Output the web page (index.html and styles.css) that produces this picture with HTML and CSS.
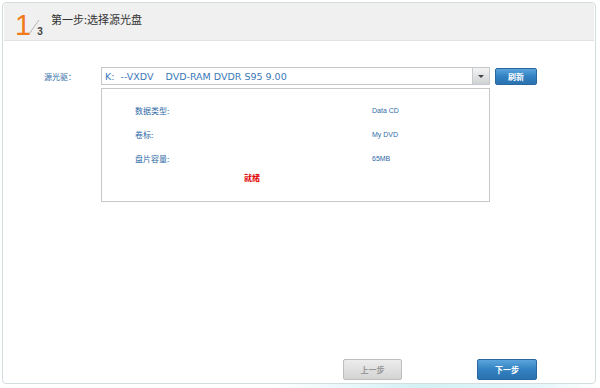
FILE: index.html
```html
<!DOCTYPE html>
<html lang="zh-CN">
<head>
    <meta charset="UTF-8">
    <title>选择源光盘</title>
    <link rel="stylesheet" href="styles.css">
</head>
<body>
    <div class="panel">
        <!-- Cabecera del paso -->
        <div class="header">
            <span class="step">
                <span class="step-num">1</span>
                <svg class="step-slash" width="12" height="16" viewBox="0 0 12 16"><line x1="1" y1="15" x2="11" y2="1" stroke="#b5b5b5" stroke-width="1"/></svg>
                <span class="step-total">3</span>
            </span>
            <span class="title">第一步:选择源光盘</span>
        </div>

        <div class="content">
            <div class="form-row">
                <span class="label">源光驱：</span>
                <div class="select">
                    <span class="select-text">K:  --VXDV    DVD-RAM DVDR S95 9.00</span>
                    <span class="select-arrow"></span>
                </div>
                <button class="btn btn-blue btn-small">刷新</button>
            </div>

            <div class="info">
                <div class="info-row"><span class="info-key">数据类型:</span><span class="info-val">Data CD</span></div>
                <div class="info-row"><span class="info-key">卷标:</span><span class="info-val">My DVD</span></div>
                <div class="info-row"><span class="info-key">盘片容量:</span><span class="info-val">65MB</span></div>
                <div class="status">就绪</div>
            </div>
        </div>

        <div class="footer">
            <button class="btn btn-gray">上一步</button>
            <button class="btn btn-blue">下一步</button>
        </div>
    </div>
</body>
</html>
```

FILE: styles.css
```css
html, body {
    margin: 0;
    height: 388px;
}
body {
    font-family: 'Noto Sans CJK SC', 'Liberation Sans', sans-serif;
    background: #fff linear-gradient(to right, #fff 45%, #d3f0f5 70%, #e6f7fa 90%, #fff) no-repeat left bottom;
    background-size: 100% 5px;
    overflow: hidden;
}
.panel {
    box-sizing: border-box;
    margin: 2px 4px 0 2px;
    height: 382px;
    border: 1px solid #d3dcde;
    border-radius: 4px;
    background: #fff;
    display: flex;
    flex-direction: column;
}
.header {
    height: 37px;
    margin: 0 1px;
    background: #f0f0f0;
    border-bottom: 1px solid #e2e2e2;
    display: flex;
    align-items: center;
    padding-left: 11px;
}
.step {
    display: inline-flex;
    align-items: flex-end;
    width: 36px;
    height: 30px;
    margin-top: 2px;
}
.step-num {
    font-family: 'Liberation Sans', sans-serif;
    font-size: 29px;
    line-height: 26px;
    color: #f27a1a;
}
.step-slash {
    margin-left: -3px;
    margin-bottom: 3px;
}
.step-total {
    font-family: 'Liberation Sans', sans-serif;
    font-size: 10px;
    font-weight: bold;
    line-height: 10px;
    color: #444;
    margin-left: -3px;
    margin-bottom: 1px;
}
.title {
    font-size: 11px;
    color: #333;
    margin-left: 0;
    margin-top: -5px;
}
.content {
    padding-top: 26px;
}
.form-row {
    display: flex;
    align-items: center;
    padding-left: 41px;
}
.label {
    width: 57px;
    font-size: 8px;
    color: #2f6aa6;
}
.select {
    box-sizing: border-box;
    width: 389px;
    height: 18px;
    border: 1px solid #c4c8cc;
    display: flex;
    align-items: center;
}
.select-text {
    flex: 1;
    white-space: pre;
    font-family: 'DejaVu Sans', sans-serif;
    font-size: 9.5px;
    color: #3a78b8;
    padding-left: 3px;
}
.select-arrow {
    width: 16px;
    height: 16px;
    background: linear-gradient(#f4f4f4, #cfd2d4);
    border-left: 1px solid #c8cbce;
    position: relative;
}
.select-arrow::after {
    content: '';
    position: absolute;
    left: 5px;
    top: 7px;
    border-left: 3px solid transparent;
    border-right: 3px solid transparent;
    border-top: 3px solid #444;
}
.btn {
    box-sizing: border-box;
    height: 21px;
    font-family: 'Noto Sans CJK SC', sans-serif;
    font-size: 8px;
    font-weight: bold;
    border-radius: 2px;
    padding: 0;
}
.btn-blue {
    width: 60px;
    color: #fff;
    background: linear-gradient(#5aa5dc, #3381c2 50%, #2b72b0);
    border: 1px solid #2a679e;
}
.btn-gray {
    width: 59px;
    color: #999;
    background: linear-gradient(#ececec, #d4d4d4);
    border: 1px solid #bdbdbd;
}
.btn-small {
    width: 42px;
    height: 17px;
    margin-left: 5px;
    margin-top: 1px;
    font-size: 8px;
}
.info {
    box-sizing: border-box;
    margin: 3px 0 0 98px;
    width: 389px;
    height: 114px;
    border: 1px solid #c8c8c8;
    padding-top: 9px;
}
.info-row {
    display: flex;
    height: 24px;
    align-items: center;
    padding-left: 33px;
}
.info-key {
    width: 237px;
    font-size: 8px;
    color: #2f6aa6;
}
.info-val {
    font-family: 'Liberation Sans', sans-serif;
    font-size: 7px;
    color: #2f6aa6;
}
.status {
    height: 16px;
    line-height: 16px;
    padding-left: 142px;
    font-size: 8px;
    font-weight: bold;
    color: #e00000;
}
.footer {
    margin-top: auto;
    display: flex;
    gap: 75px;
    padding: 0 0 3px 340px;
}
```
